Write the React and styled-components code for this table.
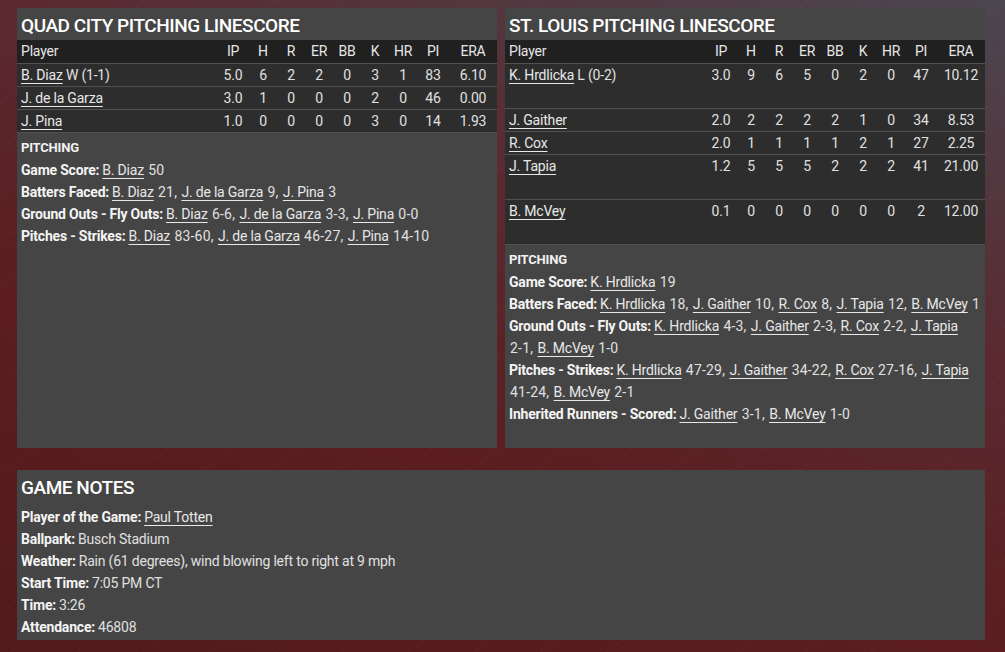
import React from "react";
import styled, { createGlobalStyle } from "styled-components";

const GlobalStyle = createGlobalStyle`
  html, body {
    margin: 0;
    padding: 0;
  }
  body {
    font-family: Roboto, "Noto Sans", sans-serif;
    color: #e6e6e6;
  }
`;

const Page = styled.div`
  width: 1005px;
  height: 652px;
  box-sizing: border-box;
  padding: 8px 20px 12px 17px;
  display: flex;
  flex-direction: column;
  gap: 22px;
  overflow: hidden;
  background:
    repeating-linear-gradient(
      -35deg,
      rgba(255, 255, 255, 0.025) 0px,
      rgba(255, 255, 255, 0.025) 1px,
      transparent 1px,
      transparent 38px
    ),
    linear-gradient(200deg, #4b4650 0%, #5a2a30 35%, #5b1d20 65%, #521a1c 100%);
`;

const TopRow = styled.div`
  display: grid;
  grid-template-columns: 480px 480px;
  gap: 8px;
`;

const Panel = styled.section`
  background: #454545;
  display: flex;
  flex-direction: column;
  min-height: 440px;
`;

const Title = styled.h2`
  margin: 0;
  padding: 3px 4px 0;
  font-size: 19px;
  line-height: 29px;
  font-weight: 500;
  color: #fff;
  letter-spacing: -0.45px;
`;

const Table = styled.table`
  width: 100%;
  border-collapse: collapse;
  font-size: 14px;
  table-layout: fixed;
  letter-spacing: -0.2px;
`;

const HeadRow = styled.tr`
  background: #202020;
  height: 23px;
  border-bottom: 1px solid #515151;
`;

const BodyRow = styled.tr`
  background: #2d2d2d;
  height: ${(p) => (p.$tall ? "45px" : "23px")};
  border-bottom: 1px solid #515151;
`;

const Th = styled.th`
  font-weight: 400;
  color: #e6e6e6;
  padding: 0;
  text-align: ${(p) => (p.$left ? "left" : "center")};
  padding-left: ${(p) => (p.$left ? "4px" : "0")};
  width: ${(p) => p.$w || "auto"};
`;

const Td = styled.td`
  padding: 2px 0 0;
  vertical-align: top;
  line-height: 19px;
  color: #e0e0e0;
  text-align: ${(p) => (p.$left ? "left" : "center")};
  padding-left: ${(p) => (p.$left ? "4px" : "0")};
`;

const Link = styled.a`
  color: #e8e8e8;
  text-decoration: underline;
  text-underline-offset: 3px;
  text-decoration-thickness: 1px;
  white-space: nowrap;
`;

const Value = styled.span`
  white-space: nowrap;
  margin-left: 1px;
  margin-right: ${(p) => (p.$last ? "0" : "1px")};
  letter-spacing: 0.2px;
`;

const Section = styled.div`
  padding: ${(p) => (p.$flush ? "3px 0 0" : "4px 4px 8px")};
  font-size: 14px;
  line-height: 22px;
  letter-spacing: -0.2px;
`;

const Heading = styled.div`
  font-weight: 700;
  font-size: 13px;
  color: #f2f2f2;
`;

const Line = styled.div`
  color: #e0e0e0;
`;

const Label = styled.b`
  font-weight: 700;
  color: #f4f4f4;
  margin-right: 3px;
`;

const Notes = styled.section`
  background: #454545;
  width: 968px;
  padding: 3px 4px 2px;
  box-sizing: border-box;
`;

const NotesTitle = styled(Title)`
  padding: 0;
  line-height: 30px;
`;

const cols = [
  ["IP", "32px"],
  ["H", "28px"],
  ["R", "28px"],
  ["ER", "28px"],
  ["BB", "28px"],
  ["K", "28px"],
  ["HR", "28px"],
  ["PI", "32px"],
  ["ERA", "48px"],
];

const quadCity = [
  { name: "B. Diaz", note: "W (1-1)", s: ["5.0", 6, 2, 2, 0, 3, 1, 83, "6.10"] },
  { name: "J. de la Garza", s: ["3.0", 1, 0, 0, 0, 2, 0, 46, "0.00"] },
  { name: "J. Pina", s: ["1.0", 0, 0, 0, 0, 3, 0, 14, "1.93"] },
];

const stLouis = [
  { name: "K. Hrdlicka", note: "L (0-2)", tall: true, s: ["3.0", 9, 6, 5, 0, 2, 0, 47, "10.12"] },
  { name: "J. Gaither", s: ["2.0", 2, 2, 2, 2, 1, 0, 34, "8.53"] },
  { name: "R. Cox", s: ["2.0", 1, 1, 1, 1, 2, 1, 27, "2.25"] },
  { name: "J. Tapia", tall: true, s: ["1.2", 5, 5, 5, 2, 2, 2, 41, "21.00"] },
  { name: "B. McVey", tall: true, s: ["0.1", 0, 0, 0, 0, 0, 0, 2, "12.00"] },
];

// items: array of [name, value] pairs
const Players = ({ items }) =>
  items.map(([n, v], i) => {
    const last = i === items.length - 1;
    return (
      <React.Fragment key={n}>
        <Link>{n}</Link>{" "}
        <Value $last={last}>
          {v}
          {last ? "" : ","}
        </Value>
        {last ? "" : " "}
      </React.Fragment>
    );
  });

const Linescore = ({ title, rows, children }) => (
  <Panel>
    <Title>{title}</Title>
    <Table>
      <thead>
        <HeadRow>
          <Th $left>Player</Th>
          {cols.map(([c, w]) => (
            <Th key={c} $w={w}>
              {c}
            </Th>
          ))}
        </HeadRow>
      </thead>
      <tbody>
        {rows.map((r) => (
          <BodyRow key={r.name} $tall={r.tall}>
            <Td $left>
              <Link>{r.name}</Link>
              {r.note ? " " + r.note : ""}
            </Td>
            {r.s.map((v, i) => (
              <Td key={i}>{v}</Td>
            ))}
          </BodyRow>
        ))}
      </tbody>
    </Table>
    <Section>
      <Heading>PITCHING</Heading>
      {children}
    </Section>
  </Panel>
);

export default function App() {
  return (
    <>
      <GlobalStyle />
      <Page>
        <TopRow>
          <Linescore title="QUAD CITY PITCHING LINESCORE" rows={quadCity}>
            <Line>
              <Label>Game Score:</Label>
              <Players items={[["B. Diaz", "50"]]} />
            </Line>
            <Line>
              <Label>Batters Faced:</Label>
              <Players items={[["B. Diaz", "21"], ["J. de la Garza", "9"], ["J. Pina", "3"]]} />
            </Line>
            <Line>
              <Label>Ground Outs - Fly Outs:</Label>
              <Players items={[["B. Diaz", "6-6"], ["J. de la Garza", "3-3"], ["J. Pina", "0-0"]]} />
            </Line>
            <Line>
              <Label>Pitches - Strikes:</Label>
              <Players items={[["B. Diaz", "83-60"], ["J. de la Garza", "46-27"], ["J. Pina", "14-10"]]} />
            </Line>
          </Linescore>
          <Linescore title="ST. LOUIS PITCHING LINESCORE" rows={stLouis}>
            <Line>
              <Label>Game Score:</Label>
              <Players items={[["K. Hrdlicka", "19"]]} />
            </Line>
            <Line>
              <Label>Batters Faced:</Label>
              <Players
                items={[["K. Hrdlicka", "18"], ["J. Gaither", "10"], ["R. Cox", "8"], ["J. Tapia", "12"], ["B. McVey", "1"]]}
              />
            </Line>
            <Line>
              <Label>Ground Outs - Fly Outs:</Label>
              <Players
                items={[["K. Hrdlicka", "4-3"], ["J. Gaither", "2-3"], ["R. Cox", "2-2"], ["J. Tapia", "2-1"], ["B. McVey", "1-0"]]}
              />
            </Line>
            <Line>
              <Label>Pitches - Strikes:</Label>
              <Players
                items={[["K. Hrdlicka", "47-29"], ["J. Gaither", "34-22"], ["R. Cox", "27-16"], ["J. Tapia", "41-24"], ["B. McVey", "2-1"]]}
              />
            </Line>
            <Line>
              <Label>Inherited Runners - Scored:</Label>
              <Players items={[["J. Gaither", "3-1"], ["B. McVey", "1-0"]]} />
            </Line>
          </Linescore>
        </TopRow>
        <Notes>
          <NotesTitle>GAME NOTES</NotesTitle>
          <Section $flush>
            <Line>
              <Label>Player of the Game:</Label>
              <Link>Paul Totten</Link>
            </Line>
            <Line>
              <Label>Ballpark:</Label>Busch Stadium
            </Line>
            <Line>
              <Label>Weather:</Label>Rain (61 degrees), wind blowing left to right at 9 mph
            </Line>
            <Line>
              <Label>Start Time:</Label>7:05 PM CT
            </Line>
            <Line>
              <Label>Time:</Label>3:26
            </Line>
            <Line>
              <Label>Attendance:</Label>46808
            </Line>
          </Section>
        </Notes>
      </Page>
    </>
  );
}
